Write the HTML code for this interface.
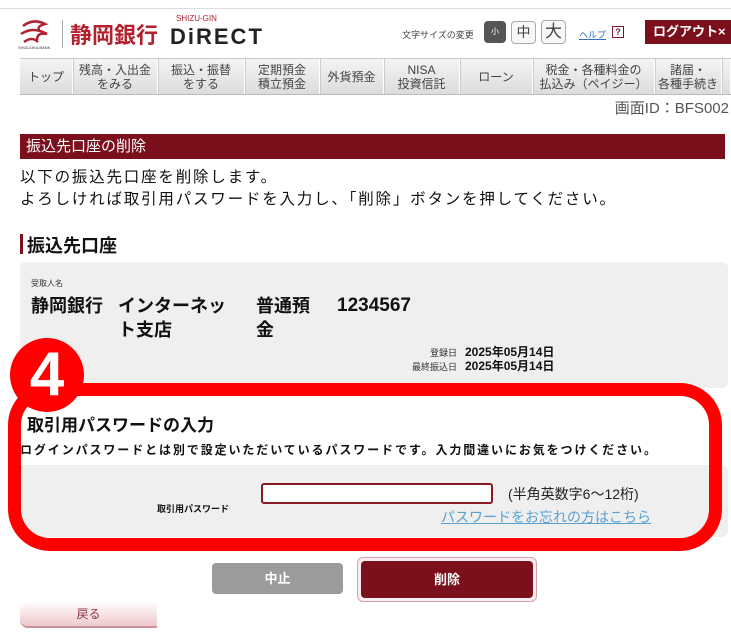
<!DOCTYPE html>
<html><head><meta charset="utf-8"><style>
*{margin:0;padding:0;box-sizing:border-box}
body{width:731px;height:642px;overflow:hidden;background:#fff;font-family:"Liberation Sans","Noto Sans CJK JP",sans-serif;color:#111;position:relative}
.a{position:absolute}
.nav{position:absolute;top:58px;left:20px;width:711px;height:37px;background:linear-gradient(#f4f4f4,#dcdcdc);display:flex;border-top:1px solid #ccc;border-bottom:1px solid #bbb}
.nav div{border-right:1px solid #fff;box-shadow:1px 0 0 #ccc;display:flex;align-items:center;justify-content:center;text-align:center;font-size:12px;line-height:14px;color:#444}
</style></head><body>
<div class="a" style="top:8px;left:0;width:731px;height:1px;background:#ddd"></div>
<svg class="a" style="left:18px;top:18px" width="40" height="32"><g fill="none" stroke="#b2212f" stroke-width="2.5"><path d="M5 8 q10-8 22-2 q-8 2-6 6"/><path d="M3 16 q12-8 26 0 q-10-2-10 6"/><path d="M6 24 q8-6 14 0"/></g><text x="0" y="31" font-size="4" fill="#333">SHIZUOKA BANK</text></svg>
<div class="a" style="left:62px;top:20px;width:1px;height:28px;background:#aaa"></div>
<div class="a" style="left:70px;top:18px;font-size:22px;font-weight:bold;color:#b2212f;font-family:'Noto Sans CJK JP',sans-serif">静岡銀行</div>
<div class="a" style="left:176px;top:14px;font-size:8px;color:#b2212f">SHIZU-GIN</div>
<div class="a" style="left:170px;top:24px;font-size:22px;font-weight:bold;letter-spacing:2px;color:#222">DiRECT</div>
<div class="a" style="left:402px;top:28px;font-size:9px;color:#444">文字サイズの変更</div>
<div class="a" style="left:484px;top:21px;width:22px;height:22px;border-radius:4px;background:#555;color:#fff;font-size:8px;text-align:center;line-height:22px">小</div>
<div class="a" style="left:511px;top:21px;width:25px;height:23px;border-radius:4px;border:1px solid #aaa;background:#f8f8f8;font-size:14px;text-align:center;line-height:21px;color:#444">中</div>
<div class="a" style="left:541px;top:20px;width:25px;height:24px;border-radius:4px;border:1px solid #aaa;background:#f8f8f8;font-size:17px;text-align:center;line-height:22px;color:#444">大</div>
<div class="a" style="left:579px;top:28px;font-size:9px;color:#3070c0;text-decoration:underline">ヘルプ</div>
<div class="a" style="left:612px;top:26px;width:12px;height:12px;border:1px solid #8a1020;color:#8a1020;font-size:9px;font-weight:bold;text-align:center;line-height:10px">?</div>
<div class="a" style="left:645px;top:20px;width:86px;height:24px;background:#7b0f1c;color:#fff;font-size:13px;font-weight:bold;line-height:24px;padding-left:8px">ログアウト×</div>
<div class="nav">
<div style="width:53px">トップ</div><div style="width:85px">残高・入出金<br>をみる</div><div style="width:87px">振込・振替<br>をする</div><div style="width:75px">定期預金<br>積立預金</div><div style="width:64px">外貨預金</div><div style="width:76px">NISA<br>投資信託</div><div style="width:73px">ローン</div><div style="width:122px">税金・各種料金の<br>払込み（ペイジー）</div><div style="width:67px">諸届・<br>各種手続き</div><div style="width:9px"></div>
</div>
<div class="a" style="right:2px;top:97px;font-size:15px;color:#555">画面ID：BFS002</div>
<div class="a" style="left:20px;top:134px;width:705px;height:25px;background:#7b0f1c;color:#fff;font-size:15px;line-height:25px;padding-left:6px">振込先口座の削除</div>
<div class="a" style="left:20px;top:167px;font-size:15.5px;line-height:22px;letter-spacing:1.8px;white-space:nowrap">以下の振込先口座を削除します。<br>よろしければ取引用パスワードを入力し、「削除」ボタンを押してください。</div>
<div class="a" style="left:20px;top:234px;width:3px;height:20px;background:#7b0f1c"></div>
<div class="a" style="left:27px;top:232px;font-size:18px;font-weight:bold">振込先口座</div>
<div class="a" style="left:20px;top:262px;width:708px;height:126px;background:#efefef;border-radius:6px"></div>
<div class="a" style="left:31px;top:278px;font-size:8px;color:#333">受取人名</div>
<div class="a" style="left:31px;top:294px;font-size:18px;font-weight:bold;line-height:24px">静岡銀行</div>
<div class="a" style="left:118px;top:294px;font-size:18px;font-weight:bold;line-height:24px;width:120px">インターネッ<br>ト支店</div>
<div class="a" style="left:256px;top:294px;font-size:18px;font-weight:bold;line-height:24px">普通預<br>金</div>
<div class="a" style="left:337px;top:294px;font-size:19px;font-weight:bold;line-height:24px">1234567</div>
<div class="a" style="left:400px;top:346px;font-size:9px;color:#333;text-align:right;width:57px;line-height:14px">登録日<br>最終振込日</div>
<div class="a" style="left:465px;top:345px;font-size:12px;font-weight:bold;line-height:14px">2025年05月14日<br>2025年05月14日</div>
<div class="a" style="left:8px;top:383px;width:714px;height:168px;border-radius:42px;background:#fff"></div>
<div class="a" style="left:20px;top:465px;width:708px;height:72px;background:#efefef;border-radius:0 6px 6px 0"></div>
<div class="a" style="left:8px;top:383px;width:714px;height:168px;border:13px solid #f00;border-radius:42px"></div>
<div class="a" style="left:10px;top:338px;width:74px;height:74px;border-radius:50%;background:#f00;color:#fff;font-size:62px;font-weight:bold;text-align:center;line-height:74px">4</div>
<div class="a" style="left:27px;top:411px;font-size:17px;font-weight:bold">取引用パスワードの入力</div>
<div class="a" style="left:20px;top:441px;font-size:12px;font-weight:bold;white-space:nowrap;letter-spacing:1.9px">ログインパスワードとは別で設定いただいているパスワードです。入力間違いにお気をつけください。</div>
<div class="a" style="left:157px;top:502px;font-size:9px;font-weight:bold">取引用パスワード</div>
<div class="a" style="left:261px;top:483px;width:232px;height:21px;border:2px solid #8a1a25;border-radius:3px;background:#fff"></div>
<div class="a" style="left:508px;top:484px;font-size:14px;color:#222">(半角英数字6〜12桁)</div>
<div class="a" style="left:441px;top:507px;font-size:14px;color:#5aa0d0;text-decoration:underline">パスワードをお忘れの方はこちら</div>
<div class="a" style="left:212px;top:563px;width:131px;height:31px;border-radius:4px;background:#9b9b9b;color:#fff;font-size:13px;font-weight:bold;text-align:center;line-height:31px">中止</div>
<div class="a" style="left:357px;top:557px;width:180px;height:45px;border-radius:6px;border:1px solid #d8a0a8;background:#fbeef0"></div>
<div class="a" style="left:361px;top:561px;width:172px;height:37px;border-radius:4px;background:#7b0f1c;color:#fff;font-size:13px;font-weight:bold;text-align:center;line-height:37px">削除</div>
<div class="a" style="left:20px;top:601px;width:137px;height:27px;background:linear-gradient(#fff,#f0c8cc);border-bottom:2px solid #c89098;border-radius:8px 0 0 8px;color:#8a3a45;font-size:12px;text-align:center;line-height:26px">戻る</div>
</body></html>
